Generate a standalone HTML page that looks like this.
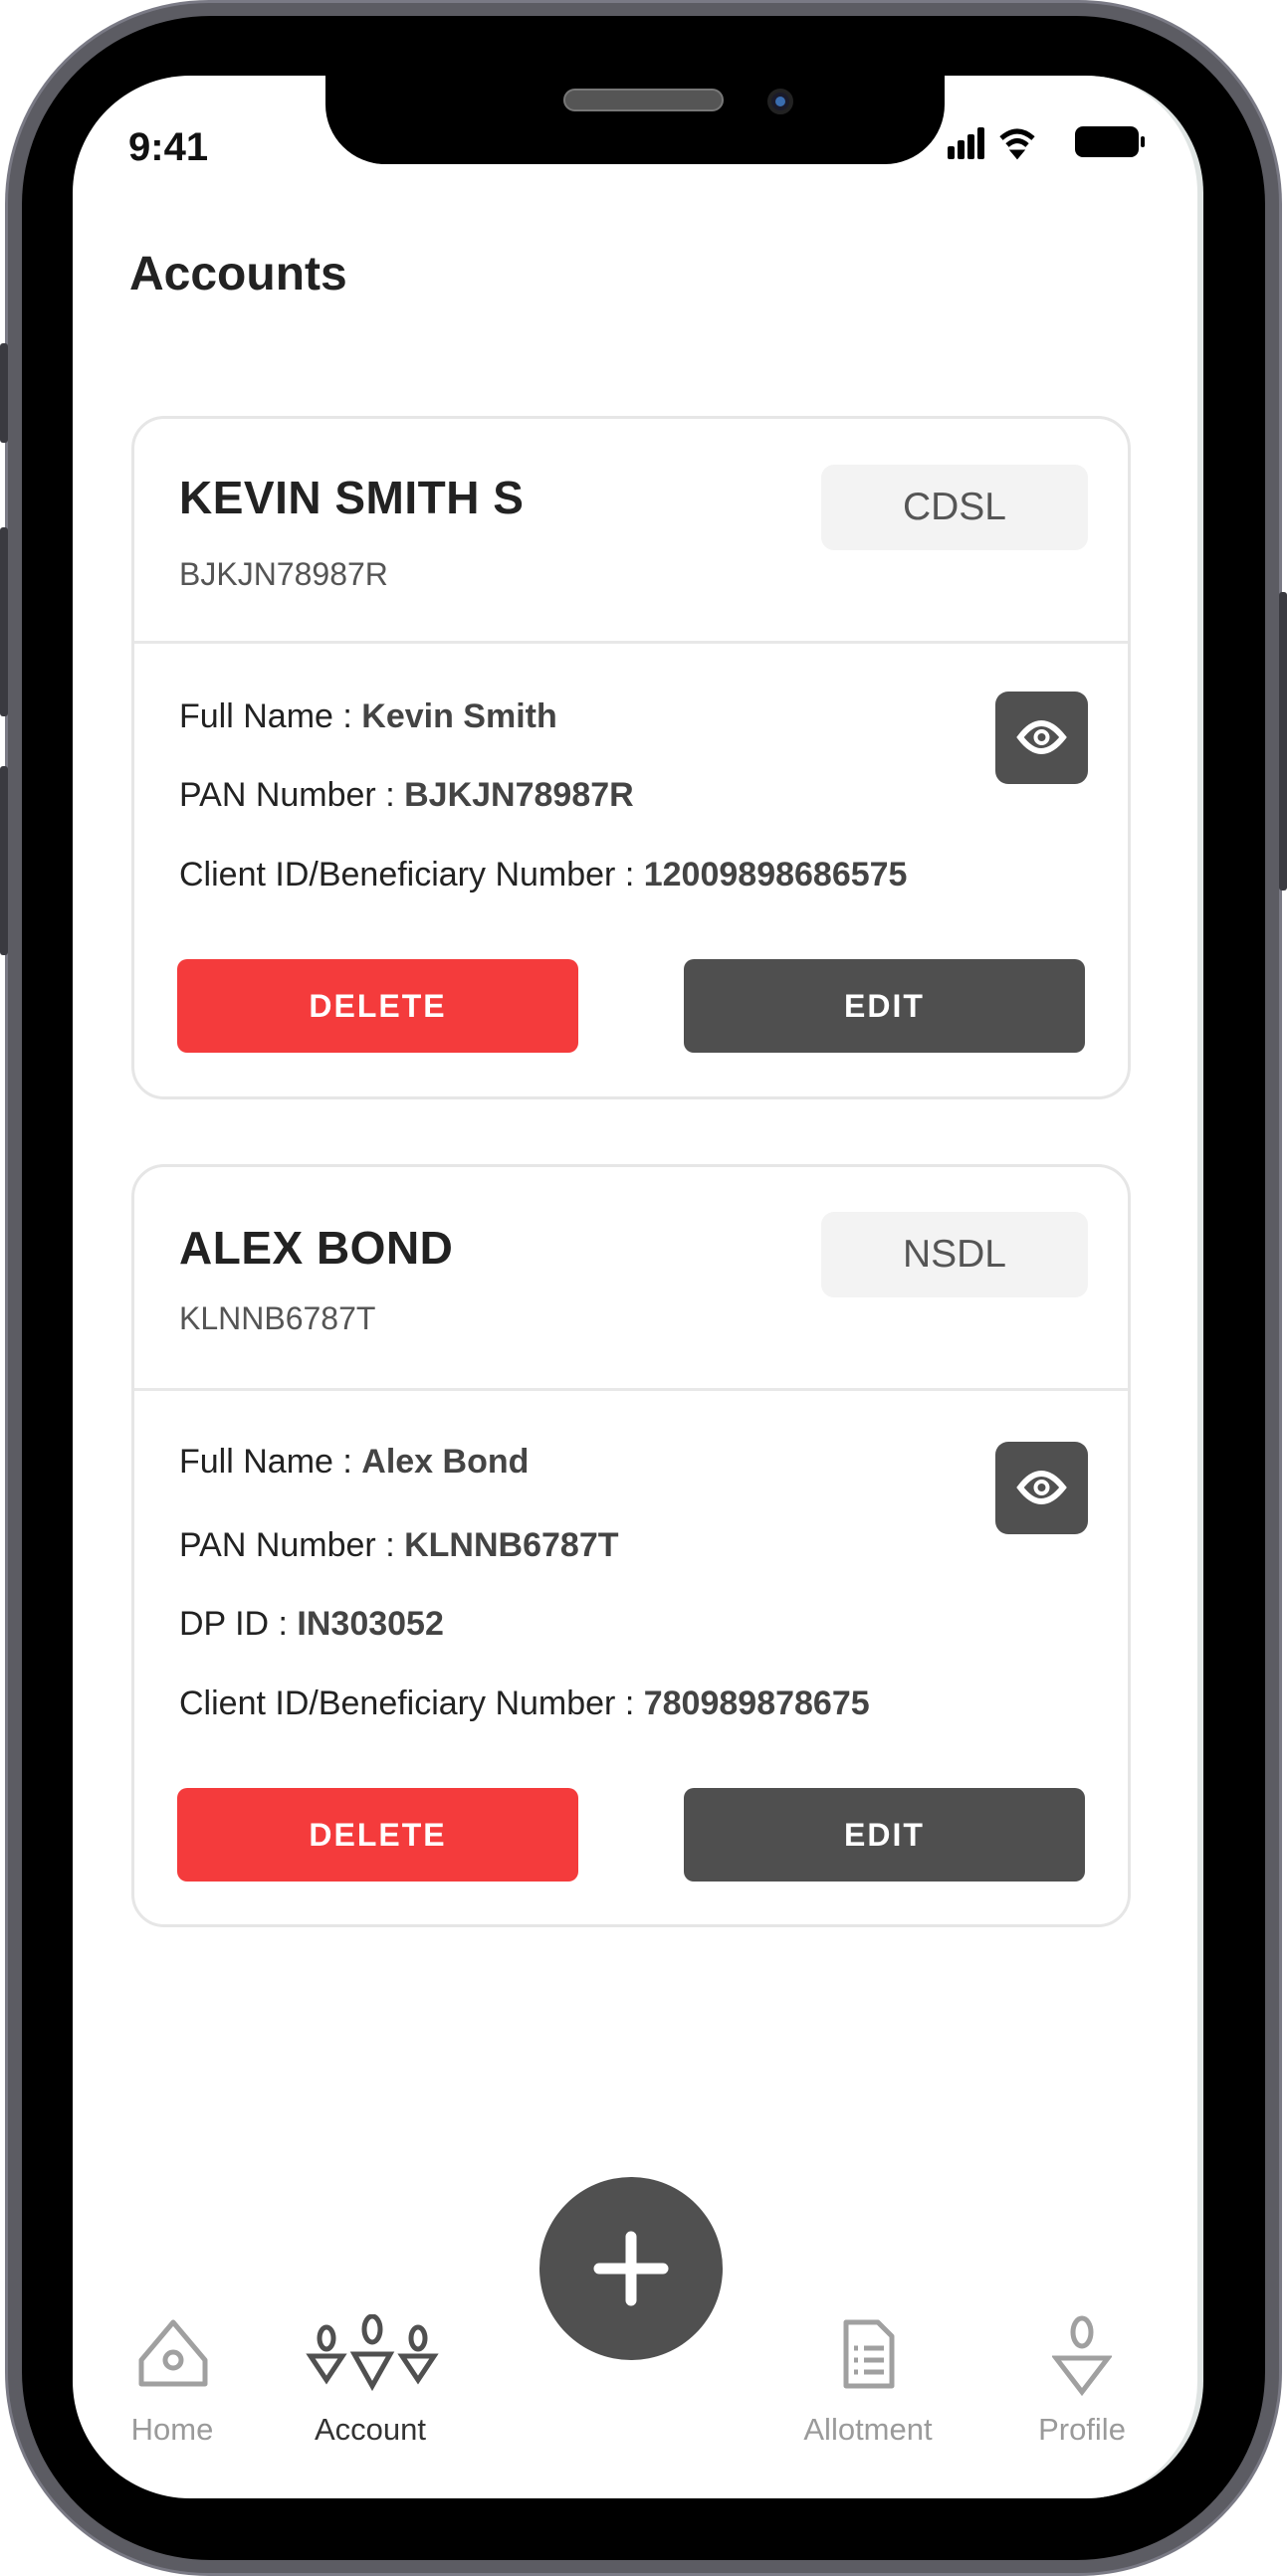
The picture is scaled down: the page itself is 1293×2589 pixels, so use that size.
<!DOCTYPE html>
<html><head><meta charset="utf-8"><style>
*{margin:0;padding:0;box-sizing:border-box}
html,body{width:1293px;height:2589px;background:#fff;overflow:hidden;font-family:"Liberation Sans",sans-serif}
.abs{position:absolute}
#frame{left:5px;top:0;width:1283px;height:2589px;border-radius:205px;background:#5c5c63;border:3px solid #7a7a85}
#black{left:22px;top:16px;width:1249px;height:2557px;border-radius:190px;background:#000}
#screen{left:73px;top:76px;width:1136px;height:2435px;border-radius:118px;background:#fff;overflow:hidden;border-right:6px solid #dfe4e3}
#notch{left:327px;top:60px;width:622px;height:105px;background:#000;border-radius:0 0 60px 60px}
.t{position:absolute;white-space:nowrap}
.card{position:absolute;left:132px;width:1004px;border:3px solid #e6e6e6;border-radius:33px;background:#fff}
.name{font-size:46px;font-weight:bold;color:#222;letter-spacing:0.5px}
.badge{position:absolute;left:690px;width:268px;height:86px;background:#f3f3f3;border-radius:13px;font-size:39px;color:#555;text-align:center;line-height:86px}
.sub{font-size:32px;color:#555}
.div{position:absolute;left:0;width:100%;height:3px;background:#e8e8e8}
.row{font-size:34px;color:#222}
.row b{color:#444}
.eye{position:absolute;left:865px;width:93px;height:93px;background:#505050;border-radius:13px}
.btn{position:absolute;width:403px;height:94px;border-radius:10px;color:#fff;font-weight:bold;font-size:32px;letter-spacing:2px;text-align:center;line-height:94px}
.del{left:43px;background:#f43b3c}
.edit{left:552px;background:#4f4f4f}
.nav{font-size:31px;color:#9a9a9a;text-align:center;width:200px}
</style></head><body>
<div id="frame" class="abs"></div>
<div class="abs" style="left:0;top:345px;width:8px;height:100px;background:#3a3a40;border-radius:3px"></div>
<div class="abs" style="left:0;top:530px;width:8px;height:190px;background:#3a3a40;border-radius:3px"></div>
<div class="abs" style="left:0;top:770px;width:8px;height:190px;background:#3a3a40;border-radius:3px"></div>
<div class="abs" style="left:1285px;top:595px;width:8px;height:300px;background:#3a3a40;border-radius:3px"></div>
<div id="black" class="abs"></div>
<div id="screen" class="abs"></div>
<div id="notch" class="abs"></div>
<div class="abs" style="left:566px;top:89px;width:161px;height:23px;border-radius:12px;background:#555;border:2px solid #777"></div>
<div class="abs" style="left:771px;top:89px;width:26px;height:26px;border-radius:50%;background:#1a1a2a;border:4px solid #222"><div style="margin:4px;width:10px;height:10px;border-radius:50%;background:#3a6db0"></div></div>

<div class="t" style="left:129px;top:126px;font-size:40px;font-weight:bold;color:#111">9:41</div>
<svg class="abs" style="left:950px;top:125px" width="210" height="40" viewBox="0 0 210 40">
<rect x="2" y="22" width="7" height="13" rx="2" fill="#000"/><rect x="12" y="16" width="7" height="19" rx="2" fill="#000"/><rect x="22" y="10" width="7" height="25" rx="2" fill="#000"/><rect x="32" y="3" width="7" height="32" rx="2" fill="#000"/>
<path d="M56 14 Q72 0 88 14" stroke="#000" stroke-width="5" fill="none"/><path d="M62 21 Q72 12 82 21" stroke="#000" stroke-width="5" fill="none"/><path d="M67 27 L72 33 L77 27 Z" fill="#000" stroke="#000" stroke-width="3"/>
<rect x="130" y="2" width="64" height="31" rx="8" fill="#000"/><rect x="196" y="12" width="4" height="11" rx="2" fill="#000"/>
</svg>

<div class="t" style="left:130px;top:248px;font-size:48px;font-weight:bold;color:#222">Accounts</div>

<div class="card" style="top:418px;height:687px">
 <div class="t name" style="left:45px;top:52px">KEVIN SMITH S</div>
 <div class="badge" style="top:46px">CDSL</div>
 <div class="t sub" style="left:45px;top:138px">BJKJN78987R</div>
 <div class="div" style="top:223px"></div>
 <div class="t row" style="left:45px;top:280px">Full Name : <b>Kevin Smith</b></div>
 <div class="t row" style="left:45px;top:359px">PAN Number : <b>BJKJN78987R</b></div>
 <div class="t row" style="left:45px;top:439px">Client ID/Beneficiary Number : <b>12009898686575</b></div>
 <div class="eye" style="top:274px"><svg width="93" height="93" viewBox="0 0 93 93"><path d="M25 46 Q46 18 68 46 Q46 74 25 46 Z" fill="none" stroke="#fff" stroke-width="6"/><circle cx="46.5" cy="46" r="6" fill="none" stroke="#fff" stroke-width="4"/></svg></div>
 <div class="btn del" style="top:543px">DELETE</div>
 <div class="btn edit" style="top:543px">EDIT</div>
</div>

<div class="card" style="top:1170px;height:767px">
 <div class="t name" style="left:45px;top:54px">ALEX BOND</div>
 <div class="badge" style="top:45px">NSDL</div>
 <div class="t sub" style="left:45px;top:134px">KLNNB6787T</div>
 <div class="div" style="top:222px"></div>
 <div class="t row" style="left:45px;top:277px">Full Name : <b>Alex Bond</b></div>
 <div class="t row" style="left:45px;top:361px">PAN Number : <b>KLNNB6787T</b></div>
 <div class="t row" style="left:45px;top:440px">DP ID : <b>IN303052</b></div>
 <div class="t row" style="left:45px;top:520px">Client ID/Beneficiary Number : <b>780989878675</b></div>
 <div class="eye" style="top:276px"><svg width="93" height="93" viewBox="0 0 93 93"><path d="M25 46 Q46 18 68 46 Q46 74 25 46 Z" fill="none" stroke="#fff" stroke-width="6"/><circle cx="46.5" cy="46" r="6" fill="none" stroke="#fff" stroke-width="4"/></svg></div>
 <div class="btn del" style="top:624px">DELETE</div>
 <div class="btn edit" style="top:624px">EDIT</div>
</div>

<div class="abs" style="left:542px;top:2188px;width:184px;height:184px;border-radius:50%;background:#505050"></div>
<svg class="abs" style="left:594px;top:2240px" width="80" height="80" viewBox="0 0 80 80"><path d="M40 8 V72 M8 40 H72" stroke="#fff" stroke-width="11" stroke-linecap="round"/></svg>

<svg class="abs" style="left:138px;top:2330px" width="72" height="72" viewBox="0 0 72 72"><path d="M36 4 L68 42 V66 H4 V42 Z" fill="none" stroke="#a0a0a0" stroke-width="5" stroke-linejoin="round"/><circle cx="36" cy="42" r="8" fill="none" stroke="#a0a0a0" stroke-width="5"/></svg>
<svg class="abs" style="left:306px;top:2326px" width="136" height="84" viewBox="0 0 136 84"><g fill="none" stroke="#505050" stroke-width="5"><ellipse cx="22" cy="24" rx="7" ry="11"/><path d="M6 42 H38 L22 66 Z"/><ellipse cx="68" cy="15" rx="8" ry="13"/><path d="M50 40 H86 L68 72 Z"/><ellipse cx="114" cy="24" rx="7" ry="11"/><path d="M98 42 H130 L114 66 Z"/></g></svg>
<svg class="abs" style="left:846px;top:2330px" width="54" height="72" viewBox="0 0 54 72"><path d="M4 4 H36 L50 18 V68 H4 Z" fill="none" stroke="#a0a0a0" stroke-width="5" stroke-linejoin="round"/><g stroke="#a0a0a0" stroke-width="5"><path d="M12 30h4M22 30h20M12 42h4M22 42h20M12 54h4M22 54h20"/></g></svg>
<svg class="abs" style="left:1057px;top:2326px" width="60" height="84" viewBox="0 0 60 84"><g fill="none" stroke="#a0a0a0" stroke-width="5"><ellipse cx="30" cy="18" rx="9" ry="14"/><path d="M4 44 H56 L30 78 Z"/></g></svg>

<div class="t nav" style="left:73px;top:2424px">Home</div>
<div class="t nav" style="left:272px;top:2424px;color:#333">Account</div>
<div class="t nav" style="left:772px;top:2424px">Allotment</div>
<div class="t nav" style="left:987px;top:2424px">Profile</div>
</body></html>
